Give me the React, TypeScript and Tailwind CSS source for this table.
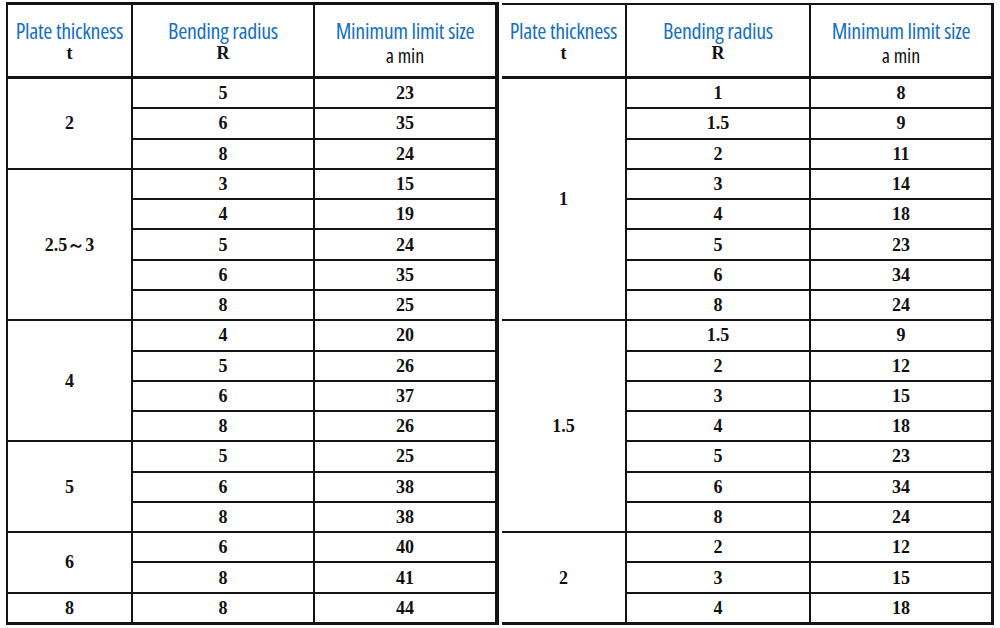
import React from "react";

type Group = { t: string; rows: [string, string][] };

const leftData: Group[] = [
  { t: "2", rows: [["5", "23"], ["6", "35"], ["8", "24"]] },
  { t: "2.5～3", rows: [["3", "15"], ["4", "19"], ["5", "24"], ["6", "35"], ["8", "25"]] },
  { t: "4", rows: [["4", "20"], ["5", "26"], ["6", "37"], ["8", "26"]] },
  { t: "5", rows: [["5", "25"], ["6", "38"], ["8", "38"]] },
  { t: "6", rows: [["6", "40"], ["8", "41"]] },
  { t: "8", rows: [["8", "44"]] },
];

const rightData: Group[] = [
  { t: "1", rows: [["1", "8"], ["1.5", "9"], ["2", "11"], ["3", "14"], ["4", "18"], ["5", "23"], ["6", "34"], ["8", "24"]] },
  { t: "1.5", rows: [["1.5", "9"], ["2", "12"], ["3", "15"], ["4", "18"], ["5", "23"], ["6", "34"], ["8", "24"]] },
  { t: "2", rows: [["2", "12"], ["3", "15"], ["4", "18"]] },
];

const spanClass: Record<number, string> = {
  1: "row-span-1",
  2: "row-span-2",
  3: "row-span-3",
  4: "row-span-4",
  5: "row-span-5",
  7: "row-span-7",
  8: "row-span-8",
};

const serif = "font-['Liberation_Serif','Times_New_Roman',serif] font-bold text-[18px] leading-none text-[#111]";
const sans = "font-['Open_Sans','Liberation_Sans',sans-serif] font-stretch-condensed";

function HeadCell({ title, sub, subSerif }: { title: string; sub: string; subSerif: boolean }) {
  return (
    <div className="bg-white flex flex-col items-center justify-start pt-[14px] gap-[3px]">
      <div className={`${sans} text-[22px] leading-[22px] text-[#1570c4] tracking-[-0.3px]`}>{title}</div>
      {subSerif ? (
        <div className={`${serif} leading-[20px]`}>{sub}</div>
      ) : (
        <div className={`${sans} text-[20px] leading-[20px] mt-[2px] text-[#111]`}>{sub}</div>
      )}
    </div>
  );
}

function Table({ data, cols, className }: { data: Group[]; cols: string; className: string }) {
  return (
    <div className={`bg-[#141414] flex flex-col ${className}`}>
      <div className={`grid ${cols} gap-x-[2px] h-[71px]`}>
        <HeadCell title="Plate thickness" sub="t" subSerif />
        <HeadCell title="Bending radius" sub="R" subSerif />
        <HeadCell title="Minimum limit size" sub="a min" subSerif={false} />
      </div>
      <div className={`grid ${cols} grid-rows-[repeat(18,minmax(0,1fr))] gap-[2px] mt-[3px] h-[543px]`}>
        {data.map((g, gi) => (
          <React.Fragment key={gi}>
            <div className={`${spanClass[g.rows.length]} bg-white flex items-center justify-center ${serif}`}>
              {g.t}
            </div>
            {g.rows.map(([r, a], ri) => (
              <React.Fragment key={ri}>
                <div className={`bg-white flex items-center justify-center ${serif}`}>{r}</div>
                <div className={`bg-white flex items-center justify-center ${serif}`}>{a}</div>
              </React.Fragment>
            ))}
          </React.Fragment>
        ))}
      </div>
    </div>
  );
}

export default function App() {
  return (
    <div className="w-[1000px] h-[628px] bg-white flex items-start overflow-hidden">
      <Table
        data={leftData}
        cols="grid-cols-[123px_180px_180px]"
        className="ml-[6px] mt-[2px] border-l-2 border-t-[3px] border-r-4 border-b-[3px] border-[#141414]"
      />
      <Table
        data={rightData}
        cols="grid-cols-[123px_182px_180px]"
        className="ml-[3px] mt-[3px] border-t-[2px] border-r-[3px] border-b-[3px] border-[#141414]"
      />
    </div>
  );
}
